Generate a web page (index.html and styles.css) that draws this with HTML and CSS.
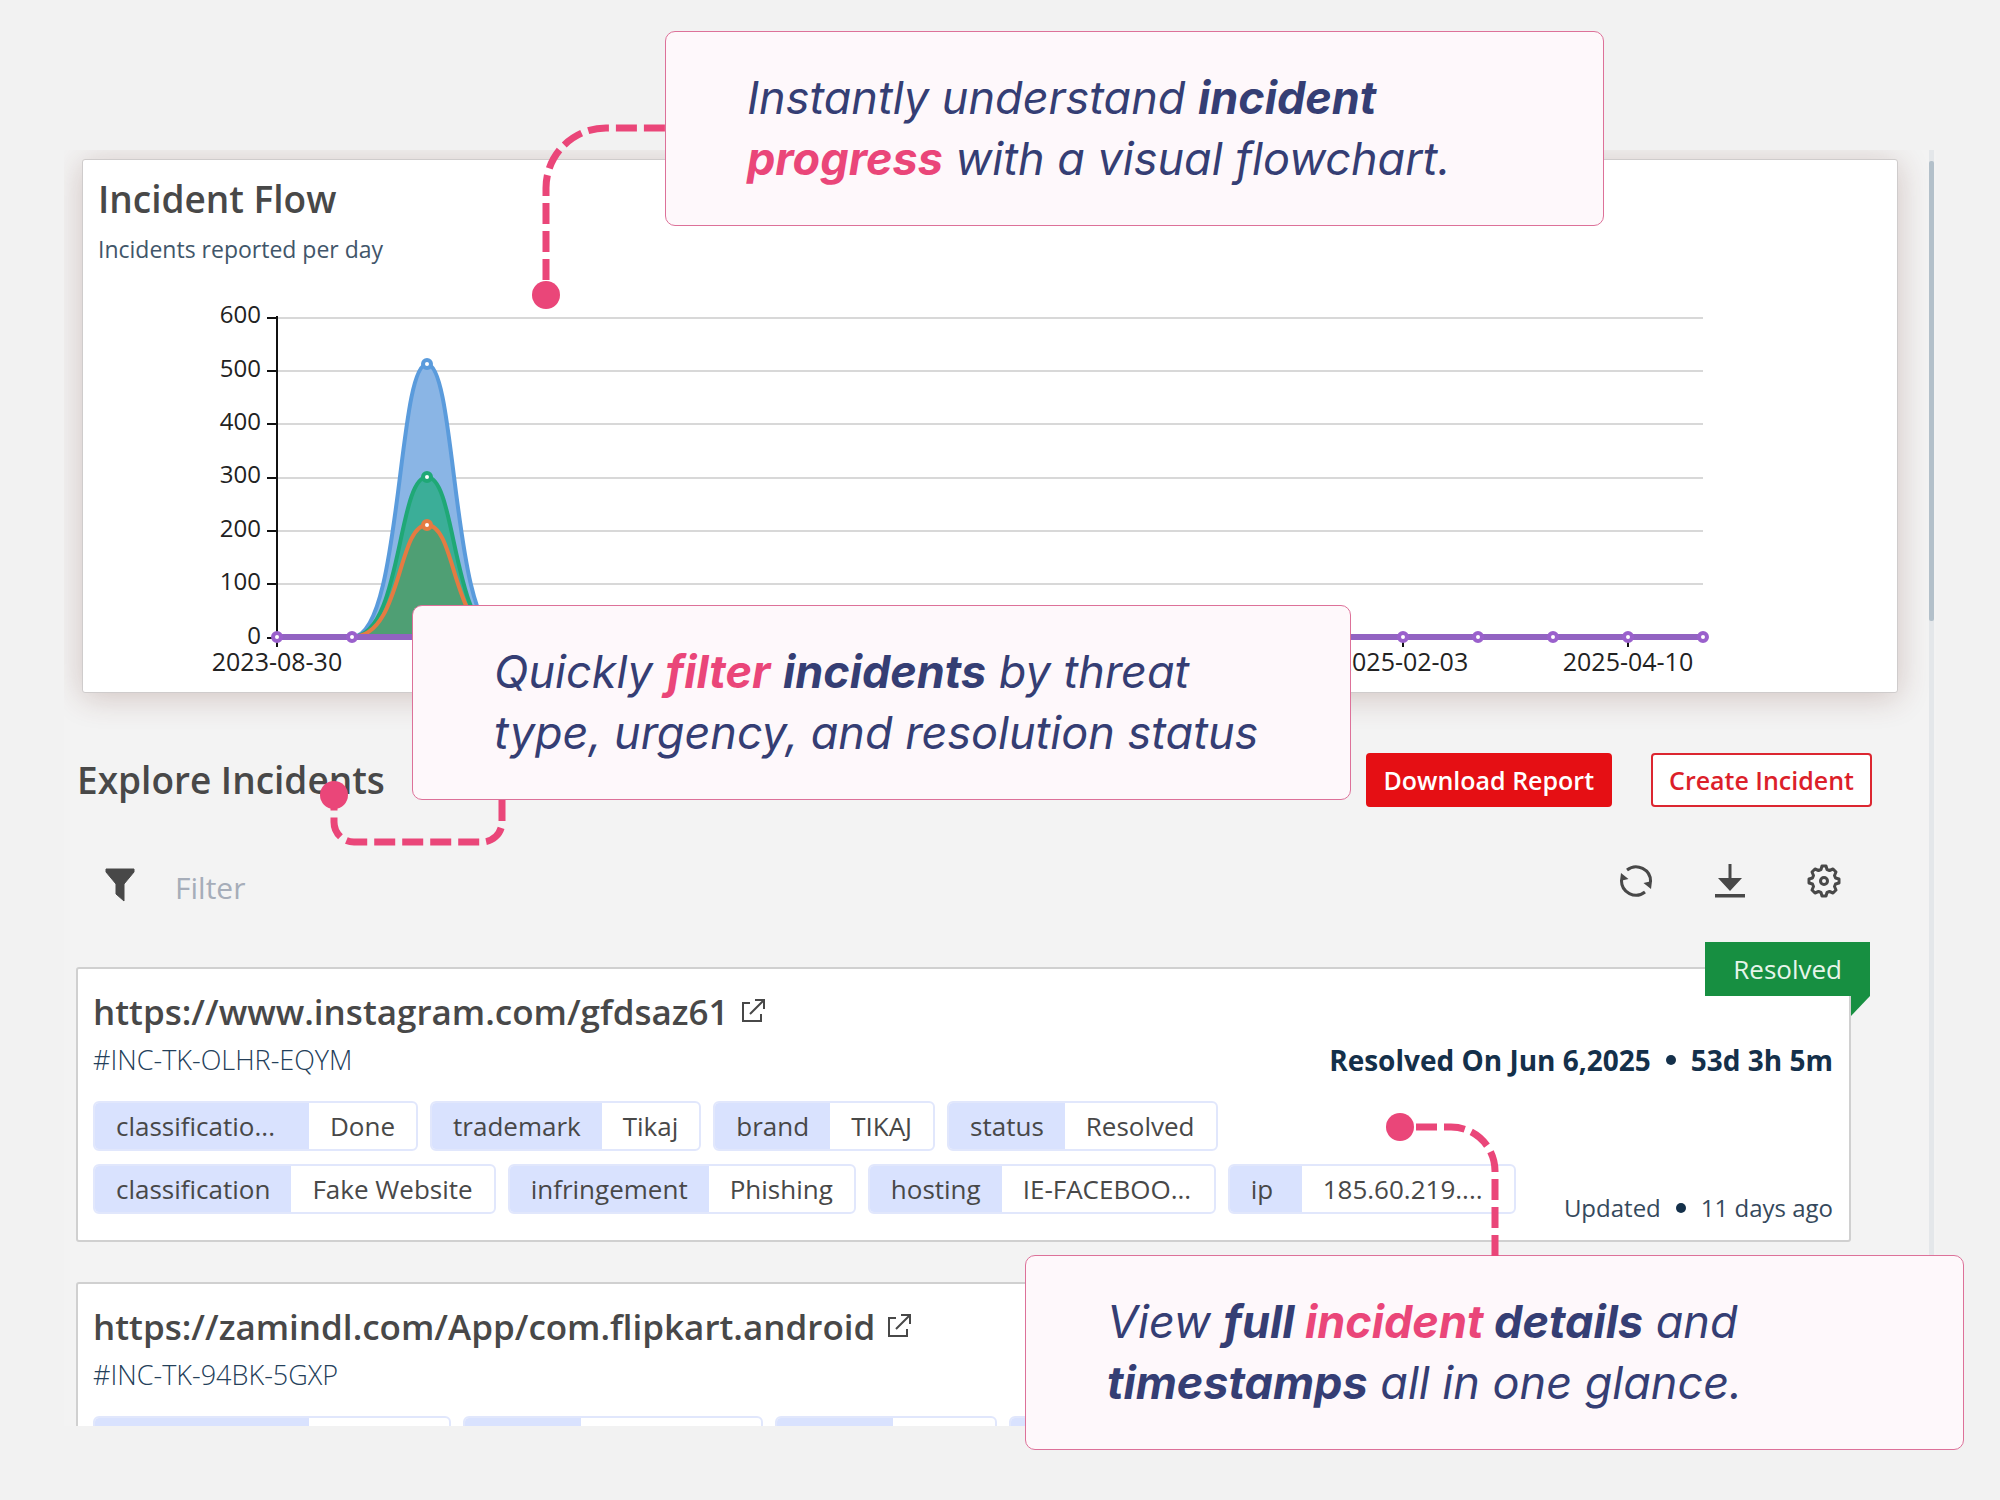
FILE: index.html
```html
<!DOCTYPE html>
<html lang="en">
<head>
<meta charset="utf-8">
<meta name="viewport" content="width=device-width, initial-scale=1">
<title>Incidents</title>
<link rel="stylesheet" href="styles.css">
</head>
<body>
<div class="page">
  <main class="panel">
    <div class="content">
      <section class="chart-card">
        <h2 class="heading">Incident Flow</h2>
        <p class="chart-note">Incidents reported per day</p>
        <svg class="chart" viewBox="0 0 1785 412" role="img" aria-label="Incidents reported per day">
          <g class="grid">
            <path d="M179 38H1605M179 91H1605M179 144H1605M179 198H1605M179 251H1605M179 304H1605"/>
          </g>
          <path class="axis" d="M179 36V367M169 38H179M169 91H179M169 144H179M169 198H179M169 251H179M169 304H179M169 358H179M1305 358V367M1530 358V367"/>
          <g class="y-labels">
            <text x="163" y="43">600</text>
            <text x="163" y="97">500</text>
            <text x="163" y="150">400</text>
            <text x="163" y="203">300</text>
            <text x="163" y="257">200</text>
            <text x="163" y="310">100</text>
            <text x="163" y="364">0</text>
          </g>
          <g class="x-labels">
            <text x="179" y="391">2023-08-30</text>
            <text x="1305" y="391">2025-02-03</text>
            <text x="1530" y="391">2025-04-10</text>
          </g>
          <path class="area blue" d="M254 357C304 357 299 84 329 84S354 357 404 357"/>
          <path class="area green" d="M254 357C304 357 299 197 329 197S354 357 404 357"/>
          <path class="area orange" d="M254 357C304 357 299 245 329 245S354 357 404 357"/>
          <circle class="dot blue" cx="329" cy="84" r="4"/>
          <circle class="dot green" cx="329" cy="197" r="4"/>
          <circle class="dot orange" cx="329" cy="245" r="4"/>
          <path class="baseline" d="M179 357H1605"/>
          <g class="dot purple">
            <circle cx="179" cy="357" r="4"/><circle cx="254" cy="357" r="4"/>
            <circle cx="1305" cy="357" r="4"/><circle cx="1380" cy="357" r="4"/>
            <circle cx="1455" cy="357" r="4"/><circle cx="1530" cy="357" r="4"/>
            <circle cx="1605" cy="357" r="4"/>
          </g>
        </svg>
      </section>

      <section class="explore">
        <header class="explore-head">
          <h2 class="heading">Explore Incidents</h2>
          <div class="actions">
            <button class="btn primary" type="button">Download Report</button>
            <button class="btn" type="button">Create Incident</button>
          </div>
        </header>

        <div class="toolbar">
          <label class="filter-icon" for="filter" aria-label="Filter">
            <svg width="30" height="34" viewBox="0 0 30 34"><path d="M1 1h28v3L19 16v17l-8-7V16L1 4z" fill="#484848" stroke="#484848" stroke-width="1" stroke-linejoin="round"/></svg>
          </label>
          <input class="filter" id="filter" type="text" placeholder="Filter">
          <button class="icon-btn" type="button" aria-label="Refresh">
            <svg width="34" height="34" viewBox="0 0 34 34" fill="none" stroke="#484848" stroke-width="3"><path d="M8 6A14.500 14.500 0 0 1 31.500 18M26 28A14.500 14.500 0 0 1 2.500 16"/><path d="M24.500 19l8.500-2-1 8zM9.500 15 1 17l1-8z" fill="#484848" stroke="none"/></svg>
          </button>
          <button class="icon-btn" type="button" aria-label="Download">
            <svg width="34" height="34" viewBox="0 0 34 34"><path d="M15.500 0h3v14H29L17 27 5 14h10.500zM2 30h30v3.500H2z" fill="#484848"/></svg>
          </button>
          <button class="icon-btn" type="button" aria-label="Settings">
            <svg width="34" height="34" viewBox="0 0 34 34" fill="none" stroke="#484848" stroke-width="3" stroke-linejoin="round"><path d="M14 5.500 15 2h4l1 3.500 2.500 1L26 5l3 3-1.500 3.500 1 2.500 3.500 1v4l-3.500 1-1 2.500L29 26l-3 3-3.500-1.500-2.500 1-1 3.500h-4l-1-3.500-2.500-1L8 29l-3-3 1.500-3.500-1-2.500L2 19v-4l3.500-1 1-2.500L5 8l3-3 3.500 1.500z"/><circle cx="17" cy="17" r="3.500"/></svg>
          </button>
        </div>

        <article class="incident">
          <span class="ribbon">Resolved</span>
          <h3 class="subheading"><a class="link" href="#instagram">https://www.instagram.com/gfdsaz61
            <svg width="24" height="24" viewBox="0 0 24 24" fill="none" stroke="#484848" stroke-width="2"><path d="M9 4H2v18h18v-7M14 1h9v9M23 1 9 15"/></svg></a></h3>
          <div class="line">
            <span class="id">#INC-TK-OLHR-EQYM</span>
            <span class="meta strong"><span>Resolved On Jun 6,2025</span><i class="bullet"></i><span>53d 3h 5m</span></span>
          </div>
          <div class="details">
            <ul class="tags">
              <li class="tag"><span class="key cut">classificatio...</span><span class="value">Done</span></li>
              <li class="tag"><span class="key">trademark</span><span class="value">Tikaj</span></li>
              <li class="tag"><span class="key">brand</span><span class="value">TIKAJ</span></li>
              <li class="tag"><span class="key">status</span><span class="value">Resolved</span></li>
              <li class="tag"><span class="key">classification</span><span class="value">Fake Website</span></li>
              <li class="tag"><span class="key">infringement</span><span class="value">Phishing</span></li>
              <li class="tag"><span class="key">hosting</span><span class="value cut">IE-FACEBOO...</span></li>
              <li class="tag"><span class="key">ip</span><span class="value cut">185.60.219....</span></li>
            </ul>
            <span class="meta"><span>Updated</span><i class="bullet"></i><span>11 days ago</span></span>
          </div>
        </article>

        <article class="incident">
          <h3 class="subheading"><a class="link" href="#zamindl">https://zamindl.com/App/com.flipkart.android
            <svg width="24" height="24" viewBox="0 0 24 24" fill="none" stroke="#484848" stroke-width="2"><path d="M9 4H2v18h18v-7M14 1h9v9M23 1 9 15"/></svg></a></h3>
          <div class="line"><span class="id">#INC-TK-94BK-5GXP</span></div>
          <div class="details">
            <ul class="tags">
              <li class="tag"><span class="key cut"></span><span class="value size-m"></span></li>
              <li class="tag"><span class="key size-s"></span><span class="value size-l"></span></li>
              <li class="tag"><span class="key size-s"></span><span class="value size-xs"></span></li>
              <li class="tag"><span class="key size-s"></span><span class="value size-m"></span></li>
            </ul>
          </div>
        </article>
      </section>
    </div>
    <div class="rail"><div class="thumb"></div></div>
  </main>

  <aside class="callout flow">
    <svg class="connector" width="134" height="186" viewBox="0 0 134 186"><path d="M14 156V64A60 60 0 0 1 74 4H134"/><circle cx="14" cy="171" r="14"/></svg>
    <p>Instantly understand <b>incident</b><br><b class="pink">progress</b> with a visual flowchart.</p>
  </aside>
  <aside class="callout filtering">
    <svg class="connector" width="186" height="65" viewBox="0 0 186 65"><path d="M182 19V41A20 20 0 0 1 162 61H34A20 20 0 0 1 14 41V14"/><circle cx="14" cy="14" r="14"/></svg>
    <p>Quickly <b class="pink">filter</b> <b>incidents</b> by threat<br>type, urgency, and resolution status</p>
  </aside>
  <aside class="callout timing">
    <svg class="connector" width="113" height="143" viewBox="0 0 113 143"><path d="M30 14H65A44 44 0 0 1 109 58V143"/><circle cx="14" cy="14" r="14"/></svg>
    <p>View <b>full <span class="pink">incident</span> details</b> and<br><b>timestamps</b> all in one glance.</p>
  </aside>
</div>
</body>
</html>
```
FILE: styles.css
```css
* { box-sizing: border-box; }

body {
  margin: 0;
  background: #f2f2f2;
  color: #484848;
  font-family: "Open Sans", "Noto Sans", sans-serif;
}

h2, h3, p, ul { margin: 0; padding: 0; }

.page {
  position: relative;
  height: 100vh;
  padding: 150px 64px 74px;
}

.panel {
  display: flex;
  height: 100%;
  overflow: hidden;
  background: #f3f3f3;
}

.content { flex: 1; min-width: 0; padding: 9px 31px 0 13px; }

.rail {
  width: 5px;
  margin-right: 2px;
  padding-top: 11px;
  background: #e4e7ea;
}
.thumb { height: 36.4%; border-radius: 2px; background: #b3c0ca; }

.heading {
  font-size: 37px;
  line-height: 48px;
  font-weight: 600;
}
.subheading {
  font-size: 35px;
  line-height: 50px;
  font-weight: 600;
}

/* Chart */
.chart-card {
  margin-left: 5px;
  padding: 15px 14px 0 15px;
  border: 1px solid #cfcccc;
  border-radius: 3px;
  background: #fff;
  box-shadow: 0 4px 32px rgba(100, 40, 30, .24);
}
.chart-note { margin-top: 10px; font-size: 23px; line-height: 32px; color: #41566a; }
.chart { display: block; width: 100%; margin-top: 15px; }
.chart text { font-size: 24px; fill: #222; }
.chart .x-labels text { font-size: 25px; }
.grid path { fill: none; stroke: #d8d8d8; stroke-width: 2; }
.axis { fill: none; stroke: #111; stroke-width: 2; }
.y-labels { text-anchor: end; }
.x-labels { text-anchor: middle; }
.area { stroke-width: 4; }
.area.blue { fill: #8ab5e5; stroke: #5a9bdc; }
.area.green { fill: #3bae98; stroke: #1fa876; }
.area.orange { fill: #4f9f74; stroke: #e57b42; }
.baseline { stroke: #9263c2; stroke-width: 6; }
.dot { fill: #fff; stroke-width: 4; }
.dot.blue { stroke: #5a9bdc; }
.dot.green { stroke: #1fa876; }
.dot.orange { stroke: #e57b42; }
.dot.purple { stroke: #9a60cc; }

/* Explore */
.explore { padding-right: 26px; }
.explore-head {
  display: flex;
  align-items: center;
  justify-content: space-between;
  margin-top: 60px;
}
.actions { display: flex; gap: 39px; }
.btn {
  height: 54px;
  padding: 0 16px;
  border: 2px solid #dc2630;
  border-radius: 4px;
  background: #fff;
  color: #dc1f2a;
  font: 600 25px/32px "Open Sans", "Noto Sans", sans-serif;
}
.btn.primary { border-color: #e50f14; background: #e50f14; color: #fff; }

.toolbar {
  display: flex;
  align-items: center;
  gap: 60px;
  margin-top: 41px;
  padding: 0 31px 0 28px;
}
.filter-icon { display: flex; margin-top: 8px; }
.filter {
  flex: 1;
  min-width: 0;
  height: 54px;
  margin: 12px 0 0 -20px;
  padding: 0;
  border: 0;
  outline: 0;
  background: none;
  font: 400 30px/40px "Open Sans", "Noto Sans", sans-serif;
}
.filter::placeholder { color: #a6adb9; opacity: 1; }
.icon-btn { display: flex; padding: 0; border: 0; background: none; }

/* Incident cards */
.incident {
  position: relative;
  margin: 53px 21px 0 -1px;
  padding: 18px 16px 26px 15px;
  border: 2px solid #d0d0d0;
  border-radius: 3px;
  background: #fff;
}
.incident + .incident { margin-top: 40px; }
.link { color: inherit; text-decoration: none; }
.link svg { margin-left: 3px; vertical-align: 2px; }

.ribbon {
  position: absolute;
  top: -27px;
  right: -21px;
  height: 54px;
  padding: 0 28px;
  background: #178f41;
  color: #e6f5ea;
  font-size: 26px;
  line-height: 54px;
}
.ribbon::after {
  content: "";
  position: absolute;
  top: 100%;
  right: 0;
  border-top: 20px solid #178f41;
  border-right: 19px solid transparent;
}

.line { display: flex; justify-content: space-between; height: 46px; line-height: 46px; }
.id { font-size: 27px; font-weight: 300; color: #24405a; }
.meta { display: flex; align-items: center; gap: 15px; font-size: 24px; color: #35495c; }
.meta.strong { font-size: 28px; font-weight: 700; color: #14304a; }
.bullet { width: 10px; height: 10px; border-radius: 50%; background: #14304a; }

.details {
  display: flex;
  align-items: flex-end;
  justify-content: space-between;
  gap: 20px;
  margin-top: 18px;
}
.details .meta { line-height: 32px; margin-bottom: -10px; }
.tags { flex: 1; display: flex; flex-wrap: wrap; gap: 13px 12px; list-style: none; }
.tag {
  display: flex;
  height: 50px;
  border: 2px solid #e1e7fc;
  border-radius: 6px;
  font-size: 26px;
  line-height: 46px;
  overflow: hidden;
}
.key { min-width: 72px; padding: 0 21px; background: #d9e2fe; }
.value { padding: 0 21px; }
.key.cut { width: 214px; }
.value.cut { width: 212px; }
.size-xs { width: 102px; }
.size-s { width: 116px; }
.size-m { width: 140px; }
.size-l { width: 180px; }

/* Callouts */
.callout {
  position: absolute;
  width: 939px;
  padding: 35px 0 36px 81px;
  border: 1px solid #dd7199;
  border-radius: 10px;
  background: #fef8fb;
  color: #353e74;
  font: italic 400 45px/61px Inter, "Open Sans", sans-serif;
  white-space: nowrap;
}
.callout b { font-weight: 700; }
.callout .pink { color: #ea4679; }
.flow { left: 665px; top: 31px; }
.filtering { left: 412px; top: 605px; }
.timing { left: 1025px; top: 1255px; }

.connector { position: absolute; }
.connector path { fill: none; stroke: #ea4679; stroke-width: 7; stroke-dasharray: 21 7; }
.connector circle { fill: #ea4679; }
.flow .connector { right: 100%; top: 92px; }
.filtering .connector { left: -93px; top: 175px; }
.timing .connector { left: 360px; bottom: 100%; }
```
